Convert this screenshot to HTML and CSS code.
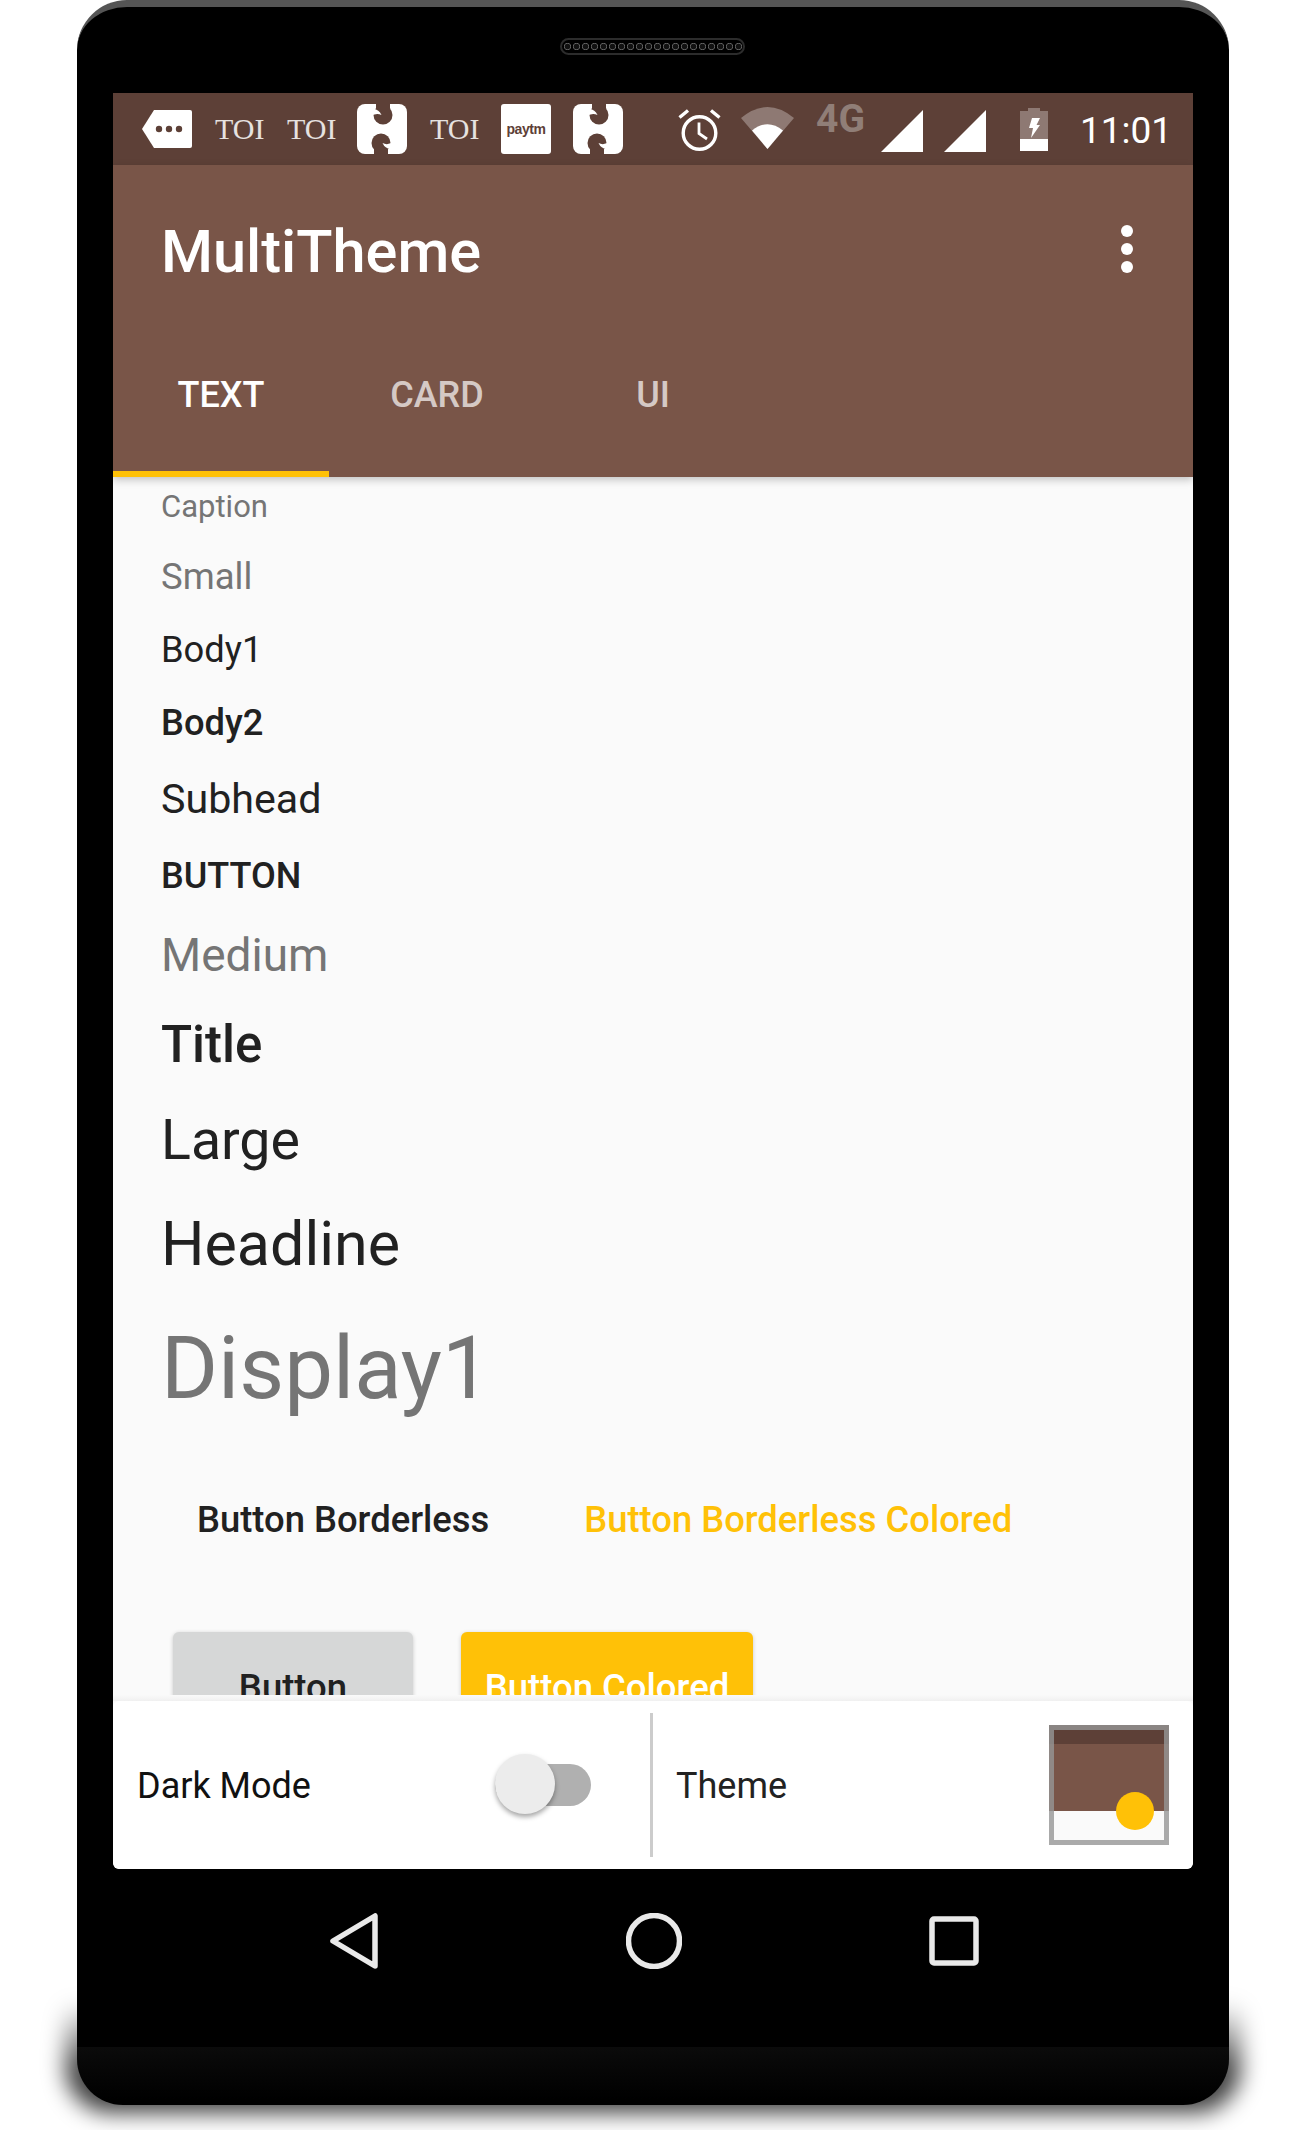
FILE: index.html
```html
<!DOCTYPE html>
<html lang="en">
<head>
  <meta charset="UTF-8">
  <title>MultiTheme</title>
  <link rel="stylesheet" href="styles.css">
</head>
<body>
  <div class="phone">
    <div class="speaker"></div>
    <div class="screen">

      <div class="statusbar">
        <div class="notif">
          <svg class="ic-tag" viewBox="0 0 50 38"><path d="M12 0H48a2 2 0 0 1 2 2V36a2 2 0 0 1-2 2H12L0 19Z" fill="#fff"/><circle cx="17" cy="19" r="3.200" fill="#5d4037"/><circle cx="27" cy="19" r="3.200" fill="#5d4037"/><circle cx="37" cy="19" r="3.200" fill="#5d4037"/></svg>
          <span class="toi toi1">TOI</span>
          <span class="toi toi2">TOI</span>
          <svg class="ic-app app1" viewBox="0 0 50 50"><use href="#snap"/></svg>
          <span class="toi toi3">TOI</span>
          <div class="paytm">paytm</div>
          <svg class="ic-app app2" viewBox="0 0 50 50"><use href="#snap"/></svg>
        </div>
        <div class="sys">
          <svg class="ic-alarm" viewBox="0 0 43 43"><circle cx="21.500" cy="25" r="16.300" fill="none" stroke="#fff" stroke-width="3.400"/><path d="M21 14.500V25.500L29 31" fill="none" stroke="#fff" stroke-width="2.800"/><path d="M1.500 9.500 10 2.500M41.500 9.500 33 2.500" stroke="#fff" stroke-width="3.400"/></svg>
          <svg class="ic-wifi" viewBox="0 0 53 42"><path d="M0 11Q26.500-11 53 11L26.500 42Z" fill="#fff" fill-opacity=".3"/><path d="M11 23.500Q26.500 11 42 23.500L26.500 42Z" fill="#fff"/></svg>
          <span class="net">4G</span>
          <svg class="ic-signal sig1" viewBox="0 0 42 42"><path d="M42 0V42H0Z" fill="#fff"/></svg>
          <svg class="ic-signal sig2" viewBox="0 0 42 42"><path d="M42 0V42H0Z" fill="#fff"/></svg>
          <svg class="ic-batt" viewBox="0 0 28 43"><path d="M8 0H20V3H28V31H0V3H8Z" fill="#fff" fill-opacity=".3"/><path d="M0 31H28V43H0Z" fill="#fff"/><path d="M12 10H20L16.500 17H20L11 30 13 20H9Z" fill="#fff"/></svg>
          <span class="clock">11:01</span>
        </div>
      </div>

      <div class="appbar">
        <div class="toolbar">
          <span class="app-title">MultiTheme</span>
          <div class="overflow"><i></i><i></i><i></i></div>
        </div>
        <div class="tabs">
          <div class="tab active">TEXT</div>
          <div class="tab">CARD</div>
          <div class="tab">UI</div>
        </div>
      </div>

      <div class="content">
        <div class="t caption">Caption</div>
        <div class="t small">Small</div>
        <div class="t body1">Body1</div>
        <div class="t body2">Body2</div>
        <div class="t subhead">Subhead</div>
        <div class="t btn-text">BUTTON</div>
        <div class="t medium">Medium</div>
        <div class="t title">Title</div>
        <div class="t large">Large</div>
        <div class="t headline">Headline</div>
        <div class="t display1">Display1</div>
        <div class="flat-row">
          <span class="flat">Button Borderless</span>
          <span class="flat colored">Button Borderless Colored</span>
        </div>
        <div class="raised-row">
          <div class="raised">Button</div>
          <div class="raised colored">Button Colored</div>
        </div>
      </div>

      <div class="strip"></div>

      <div class="bottom">
        <div class="cell dark">
          <span class="cell-label">Dark Mode</span>
          <div class="switch"><div class="thumb"></div></div>
        </div>
        <div class="cell theme">
          <span class="cell-label theme-label">Theme</span>
          <div class="swatch"><div class="swatch-top"></div><div class="swatch-mid"></div><div class="swatch-dot"></div></div>
        </div>
      </div>
    </div>

    <div class="nav">
      <svg class="ic-back" viewBox="0 0 48 56"><path d="M45 3V53L3 28Z" fill="none" stroke="#e9e9e9" stroke-width="5.500" stroke-linejoin="round"/></svg>
      <svg class="ic-home" viewBox="0 0 56 56"><circle cx="28" cy="28" r="25.500" fill="none" stroke="#e9e9e9" stroke-width="5.500"/></svg>
      <svg class="ic-recent" viewBox="0 0 50 50"><rect x="3" y="3" width="44" height="44" rx="2" fill="none" stroke="#e9e9e9" stroke-width="5.500"/></svg>
    </div>
  </div>

  <svg class="defs" width="0" height="0">
    <symbol id="snap" viewBox="0 0 50 50">
      <rect width="50" height="50" rx="8" fill="#fff"/>
      <g id="snap-half">
        <circle cx="26" cy="11" r="9.500" fill="#5d4037"/>
        <rect x="19" y="0" width="14" height="8" fill="#5d4037"/>
        <path d="M12 6Q21 3 24.500 11Q19 8 12 13Z" fill="#fff"/>
      </g>
      <use href="#snap-half" transform="rotate(180 25 25)"/>
    </symbol>
  </svg>
</body>
</html>
```

FILE: styles.css
```css
* {
  box-sizing: border-box;
}

html, body {
  margin: 0;
  padding: 0;
  background: #fff;
}

body {
  width: 1305px;
  height: 2130px;
  overflow: hidden;
  font-family: Roboto, sans-serif;
  padding-left: 77px;
  position: relative;
  z-index: 0;
}

.defs {
  position: absolute;
}

.phone {
  width: 1152px;
  height: 2105px;
  background: linear-gradient(#000 2040px, #0b0b0b 2040px, #000 2092px);
  border-radius: 50px 50px 46px 46px;
  border-top: 7px solid #555;
  padding: 86px 36px 0;
  position: relative;
}

/* soft shadow under the bottom of the phone */
.phone::before {
  content: "";
  position: absolute;
  left: -12px;
  right: -12px;
  bottom: -8px;
  height: 110px;
  background: linear-gradient(transparent, rgba(0, 0, 0, 0.75) 60%);
  border-radius: 0 0 46px 46px;
  filter: blur(11px);
  z-index: -1;
}

.speaker {
  position: absolute;
  left: 483px;
  top: 31px;
  width: 185px;
  height: 17px;
  border-radius: 9px;
  border: 2px solid #2c2c2c;
  background: radial-gradient(circle, #111 2.5px, #666 3.2px, transparent 4px) 1px 0 / 9px 13px repeat-x;
}

.screen {
  width: 1080px;
  height: 1776px;
  background: #fafafa;
  border-radius: 0 0 6px 6px;
  overflow: hidden;
}

/* status bar */
.statusbar {
  height: 72px;
  background: #5d4037;
  position: relative;
}

.notif, .sys {
  display: flex;
  align-items: center;
  height: 72px;
  position: absolute;
  top: 0;
}

.notif {
  left: 29px;
}

.sys {
  left: 565px;
}

.ic-tag {
  width: 50px;
  height: 38px;
}

.toi {
  font-family: "Liberation Serif", serif;
  font-size: 30px;
  color: #e6e2e0;
  width: 48px;
  white-space: nowrap;
}

.toi1 { margin-left: 23px; }
.toi2 { margin-left: 24px; }
.toi3 { margin-left: 23px; }

.ic-app {
  width: 50px;
  height: 50px;
}

.app1 { margin-left: 22px; }
.app2 { margin-left: 22px; }

.paytm {
  width: 50px;
  height: 50px;
  margin-left: 23px;
  background: #fff;
  border-radius: 3px;
  color: #5d4037;
  font-family: "Liberation Sans", sans-serif;
  font-weight: 700;
  font-size: 14px;
  letter-spacing: -0.4px;
  line-height: 50px;
  text-align: center;
}

.ic-alarm {
  width: 43px;
  height: 43px;
  margin-top: 1px;
}

.ic-wifi {
  width: 53px;
  height: 42px;
  margin-left: 20px;
  margin-top: -2px;
}

.net {
  font-weight: 700;
  font-size: 39px;
  color: #907e77;
  margin-left: 22px;
  margin-top: -21px;
  width: 49px;
  line-height: 44px;
}

.ic-signal {
  width: 42px;
  height: 42px;
  margin-top: 4px;
}

.sig1 { margin-left: 16px; }
.sig2 { margin-left: 21px; }

.ic-batt {
  width: 28px;
  height: 43px;
  margin-left: 34px;
  margin-top: 1px;
}

.clock {
  font-size: 37px;
  color: #fff;
  margin-left: 32px;
  margin-top: 3px;
}

/* app bar */
.appbar {
  height: 312px;
  background: #795548;
  box-shadow: 0 3px 8px rgba(0, 0, 0, 0.22);
  position: relative;
  z-index: 1;
}

.toolbar {
  height: 168px;
  padding: 0 60px 0 48px;
  display: flex;
  align-items: center;
  justify-content: space-between;
}

.app-title {
  font-weight: 500;
  font-size: 59.5px;
  color: #fff;
  margin-top: 5px;
}

.overflow {
  display: flex;
  flex-direction: column;
  gap: 6px;
}

.overflow i {
  width: 12px;
  height: 12px;
  background: #fff;
  border-radius: 50%;
}

.tabs {
  display: flex;
  height: 144px;
}

.tab {
  width: 216px;
  height: 144px;
  padding-top: 27px;
  text-align: center;
  font-weight: 500;
  font-size: 36px;
  color: rgba(255, 255, 255, 0.7);
  line-height: 70px;
}

.tab.active {
  color: #fff;
  border-bottom: 6px solid #ffc107;
}

/* text rows */
.content {
  height: 1218px;
  padding: 0 0 0 48px;
  overflow: hidden;
}

.t {
  color: #212121;
}

.caption {
  font-size: 31px;
  line-height: 40px;
  margin-top: 10px;
  color: #757575;
}

.small {
  font-size: 36.5px;
  line-height: 46px;
  margin-top: 27px;
  color: #757575;
}

.body1 {
  font-size: 36.3px;
  line-height: 46px;
  margin-top: 27px;
}

.body2 {
  font-size: 36.3px;
  font-weight: 500;
  line-height: 46px;
  margin-top: 27px;
}

.subhead {
  font-size: 41.2px;
  line-height: 50px;
  margin-top: 28px;
}

.btn-text {
  font-size: 36px;
  font-weight: 500;
  line-height: 46px;
  margin-top: 29px;
}

.medium {
  font-size: 46px;
  line-height: 58px;
  margin-top: 27px;
  color: #757575;
}

.title {
  font-size: 51px;
  font-weight: 500;
  line-height: 64px;
  margin-top: 29px;
}

.large {
  font-size: 55.5px;
  line-height: 70px;
  margin-top: 29px;
}

.headline {
  font-size: 61px;
  line-height: 80px;
  margin-top: 28px;
}

.display1 {
  font-size: 87px;
  line-height: 104px;
  margin-top: 32px;
  color: #757575;
}

.flat-row {
  display: flex;
  margin-top: 77px;
  font-size: 36.4px;
  font-weight: 500;
  line-height: 46px;
  color: #212121;
}

.flat {
  margin-left: 36px;
}

.flat.colored {
  margin-left: 95px;
  color: #ffc107;
}

.raised-row {
  display: flex;
  margin-top: 89px;
  padding-left: 12px;
}

.raised {
  width: 240px;
  height: 120px;
  border-radius: 6px;
  background: #d6d7d7;
  color: #212121;
  font-size: 36.5px;
  font-weight: 500;
  text-align: center;
  padding-top: 33px;
  line-height: 46px;
  box-shadow: 0 1px 4px rgba(0, 0, 0, 0.2);
}

.raised.colored {
  width: 292px;
  margin-left: 48px;
  background: #ffc107;
  color: #fff;
}

/* bottom panel */
.strip {
  height: 6px;
  background: linear-gradient(#fafafa, #f0f0f0);
}

.bottom {
  height: 168px;
  background: #fff;
  border-radius: 6px;
  display: flex;
}

.cell {
  display: flex;
  align-items: center;
  justify-content: space-between;
  position: relative;
}

.dark {
  width: 537px;
  padding: 0 0 0 24px;
}

.theme {
  flex: 1;
  padding: 0 24px 0 26px;
}

.theme::before {
  content: "";
  position: absolute;
  left: 0;
  top: 12px;
  bottom: 12px;
  width: 3px;
  background: #ccc;
}

.cell-label {
  font-size: 36px;
  color: #111;
  margin-top: 2px;
}

.theme-label {
  color: #222;
}

.switch {
  width: 96px;
  height: 42px;
  margin-right: 59px;
  background: #b0b0b0;
  border-radius: 21px;
  position: relative;
}

.thumb {
  position: absolute;
  left: 0;
  top: -10px;
  width: 60px;
  height: 60px;
  background: #ececec;
  border-radius: 50%;
  box-shadow: 0 3px 5px rgba(0, 0, 0, 0.35);
}

.swatch {
  width: 120px;
  height: 120px;
  background: #fafafa;
  outline: 5px solid rgba(150, 150, 150, 0.8);
  outline-offset: -5px;
  position: relative;
}

.swatch-top {
  height: 19px;
  background: #5d4037;
}

.swatch-mid {
  height: 67px;
  background: #795548;
}

.swatch-dot {
  position: absolute;
  left: 67px;
  top: 67px;
  width: 38px;
  height: 38px;
  background: #ffc107;
  border-radius: 50%;
}

/* hardware nav */
.nav {
  position: relative;
  height: 0;
}

.nav svg {
  position: absolute;
}

.ic-back {
  left: 217px;
  top: 44px;
  width: 48px;
  height: 56px;
}

.ic-home {
  left: 513px;
  top: 44px;
  width: 56px;
  height: 56px;
}

.ic-recent {
  left: 816px;
  top: 47px;
  width: 50px;
  height: 50px;
}
```
